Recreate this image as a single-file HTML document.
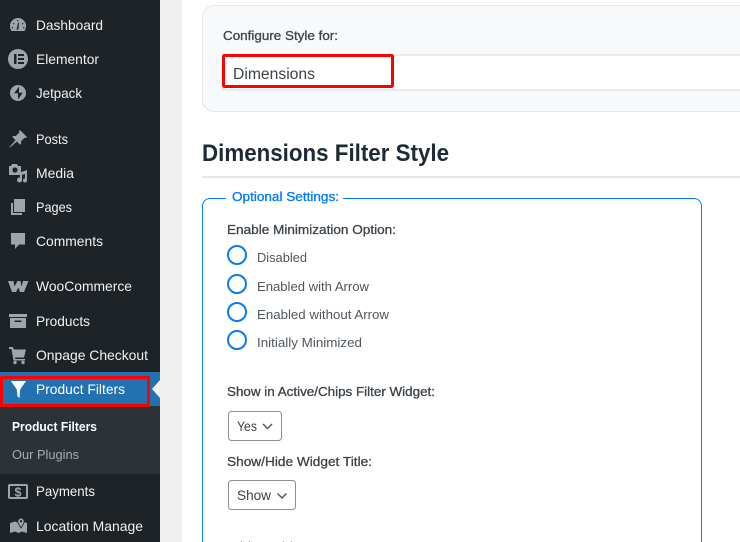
<!DOCTYPE html>
<html>
<head>
<meta charset="utf-8">
<title>Dimensions Filter Style</title>
<style>
html,body{margin:0;padding:0;width:740px;height:542px;overflow:hidden;background:#fff}
svg{display:block}
text{font-family:"Liberation Sans",sans-serif}
.m{font-size:14px;fill:#f0f0f1}
.l{font-size:13px;fill:#3c434a;stroke:#3c434a;stroke-width:.3}
.o{font-size:13px;fill:#50575e}
.i{fill:#a0a5aa}
</style>
</head>
<body>
<svg width="740" height="542" viewBox="0 0 740 542" xmlns="http://www.w3.org/2000/svg">
<rect width="740" height="542" fill="#fff"/>
<rect x="160" width="22" height="542" fill="#f0f0f1"/>
<rect width="160" height="542" fill="#1d2327"/>
<rect y="372" width="160" height="34" fill="#2271b1"/>
<rect y="406" width="160" height="68" fill="#2c3338"/>
<path d="M160 380 L152 389 L160 398Z" fill="#f0f0f1"/>
<rect x="1.5" y="377.5" width="147" height="28" fill="none" stroke="#f00" stroke-width="3"/>

<!-- sidebar text -->
<text class="m" x="36" y="30" textLength="67" lengthAdjust="spacingAndGlyphs">Dashboard</text>
<text class="m" x="36" y="64" textLength="63" lengthAdjust="spacingAndGlyphs">Elementor</text>
<text class="m" x="36" y="98" textLength="46" lengthAdjust="spacingAndGlyphs">Jetpack</text>
<text class="m" x="36" y="144" textLength="32" lengthAdjust="spacingAndGlyphs">Posts</text>
<text class="m" x="36" y="178" textLength="38" lengthAdjust="spacingAndGlyphs">Media</text>
<text class="m" x="36" y="212" textLength="36" lengthAdjust="spacingAndGlyphs">Pages</text>
<text class="m" x="36" y="246" textLength="67" lengthAdjust="spacingAndGlyphs">Comments</text>
<text class="m" x="36" y="291" textLength="96" lengthAdjust="spacingAndGlyphs">WooCommerce</text>
<text class="m" x="36" y="326" textLength="54" lengthAdjust="spacingAndGlyphs">Products</text>
<text class="m" x="36" y="360" textLength="112" lengthAdjust="spacingAndGlyphs">Onpage Checkout</text>
<text class="m" x="36" y="394" textLength="89" lengthAdjust="spacingAndGlyphs" style="fill:#fff">Product Filters</text>
<text x="12" y="431" font-size="13" font-weight="700" fill="#fff" textLength="85" lengthAdjust="spacingAndGlyphs">Product Filters</text>
<text x="12" y="459" font-size="13" fill="#a7aaad" textLength="67" lengthAdjust="spacingAndGlyphs">Our Plugins</text>
<text class="m" x="36" y="496" textLength="59" lengthAdjust="spacingAndGlyphs">Payments</text>
<text class="m" x="36" y="531" textLength="107" lengthAdjust="spacingAndGlyphs">Location Manage</text>

<!-- dashboard -->
<path class="i" d="M18 18a8 8 0 0 1 8 8c0 2-.6 3.700-1.600 5H11.600A8 8 0 0 1 10 26a8 8 0 0 1 8-8z"/>
<path d="M16.500 29.500l1.700-7 .8.2-.6 6.800zM13 23h1.200v1.200H13zM22 23h1.200v1.200H22zM11.800 27H13v1.200h-1.200zM23.200 27h1.200v1.200h-1.200zM17 20h1.200v1.200H17z" fill="#1d2327"/>
<!-- elementor -->
<circle class="i" cx="18" cy="59" r="10"/>
<path d="M14 54h2.500v10H14zM18 54h6v2h-6zM18 58h6v2h-6zM18 62h6v2h-6z" fill="#1d2327"/>
<!-- jetpack -->
<circle class="i" cx="18" cy="93" r="8"/>
<path d="M19 86.500v6.300h3.800l-4.800 6.700v-6.300h-3.800z" fill="#1d2327"/>
<!-- pin -->
<path class="i" d="M20 130l7 7-1.500 1-1-.3-3.500 3.500c.4 1.500 0 2.800-.8 3.600l-3.300-3.300-6.900 6-.5-.5 6-6.900-3.300-3.300c.8-.8 2.100-1.200 3.600-.8l3.500-3.500-.3-1z"/>
<!-- media -->
<path class="i" d="M12 164h5l1 2h3v9H9v-9h2z"/>
<circle cx="15" cy="170" r="2.600" fill="#1d2327"/>
<path class="i" d="M27 170v10.500a2 2 0 1 1-2-2v-4.500l-3 .8v5.200a2.500 2.500 0 1 1-2.500-2.500h.5v-5z"/>
<!-- pages -->
<path class="i" d="M14 199h11v13H14z"/>
<path class="i" d="M11 203h2v10h9v2H11z"/>
<!-- comments -->
<path class="i" d="M11 233h14v11.500h-6l-4 4.500v-4.500h-4z"/>
<!-- woo -->
<path class="i" d="M8 281h5.500l1 5.500 3-5.500h3l1 5.500 1.500-5.500h5.500l-4.500 11h-4l-1.500-4.500-2.500 4.500h-4z"/>
<!-- products -->
<path class="i" d="M9 314h18v3H9zM10 318h16v10H10z"/>
<path d="M14.500 320.500h7v1.500h-7z" fill="#1d2327"/>
<!-- cart -->
<path class="i" d="M9 347h4l.8 2.500H26l-2 8H15l.4 1.500H25v1.500H13.500L11.500 349H9z"/>
<circle class="i" cx="15" cy="362.500" r="1.700"/><circle class="i" cx="23" cy="362.500" r="1.700"/>
<!-- filter -->
<path d="M11 381h15l-5.800 8.500-.7 8.500-2-1.500-.7-7z" fill="#fff"/>
<!-- payments -->
<rect x="9" y="485" width="18" height="13" rx="1" fill="none" stroke="#a0a5aa" stroke-width="2"/>
<text x="18" y="496.500" font-size="12.500" font-weight="700" fill="#a0a5aa" text-anchor="middle">$</text>
<!-- location -->
<path class="i" d="M10 523l5-1.500 3.500 1.500 3.500-1.500 5 1.500v10l-5-1.500-3.500 1.500-3.500-1.500-5 1.500z"/>
<path d="M21 518a3.200 3.200 0 0 1 3.200 3.200c0 2-3.200 6.800-3.200 6.800s-3.200-4.800-3.200-6.800A3.200 3.200 0 0 1 21 518z" fill="#8fa3b5" stroke="#1d2327" stroke-width=".8"/>
<circle cx="21" cy="521.200" r="1.100" fill="#1d2327"/>

<!-- config card -->
<path d="M746 5.500H214a11.500 11.500 0 0 0-11.500 11.500v83a11.500 11.500 0 0 0 11.500 11.500h532z" fill="#f8f9fb" stroke="#e3e6ee" stroke-width="1"/>
<rect x="223" y="55" width="530" height="35" rx="4" fill="#fff" stroke="#e3e6ee" stroke-width="1.500"/>
<text class="l" x="223" y="40" textLength="115" lengthAdjust="spacingAndGlyphs">Configure Style for:</text>
<rect x="223.500" y="55.500" width="169" height="31" rx="1" fill="none" stroke="#f00" stroke-width="3"/>
<text x="233" y="79" font-size="15.500" fill="#3c434a" textLength="82" lengthAdjust="spacingAndGlyphs">Dimensions</text>

<!-- heading -->
<text x="202" y="161" font-size="24" font-weight="700" fill="#1f2937" textLength="247" lengthAdjust="spacingAndGlyphs">Dimensions Filter Style</text>
<rect x="202" y="176" width="538" height="2" fill="#e3e6ee"/>

<!-- fieldset -->
<path d="M226 198.500H210a7.500 7.500 0 0 0-7.500 7.500V542M343 198.500H694a7.500 7.500 0 0 1 7.500 7.500V542" fill="none" stroke="#007bff" stroke-width="1"/>
<text x="232" y="201" font-size="12.500" fill="#007bff" stroke="#007bff" stroke-width=".3" textLength="107" lengthAdjust="spacingAndGlyphs">Optional Settings:</text>

<text class="l" x="227" y="234" textLength="169" lengthAdjust="spacingAndGlyphs">Enable Minimization Option:</text>
<g fill="#fff" stroke="#0a7cf0" stroke-width="2">
<circle cx="237" cy="255" r="9"/>
<circle cx="237" cy="284" r="9"/>
<circle cx="237" cy="312" r="9"/>
<circle cx="237" cy="340" r="9"/>
</g>
<text class="o" x="257" y="262" textLength="50" lengthAdjust="spacingAndGlyphs">Disabled</text>
<text class="o" x="257" y="291" textLength="112" lengthAdjust="spacingAndGlyphs">Enabled with Arrow</text>
<text class="o" x="257" y="319" textLength="132" lengthAdjust="spacingAndGlyphs">Enabled without Arrow</text>
<text class="o" x="257" y="347" textLength="105" lengthAdjust="spacingAndGlyphs">Initially Minimized</text>

<text class="l" x="227" y="396" textLength="208" lengthAdjust="spacingAndGlyphs">Show in Active/Chips Filter Widget:</text>
<rect x="228.500" y="411.500" width="53" height="29" rx="3" fill="#fff" stroke="#8c8f94"/>
<text x="237" y="431" font-size="14" fill="#3c434a" textLength="20" lengthAdjust="spacingAndGlyphs">Yes</text>
<path d="M263 424l4.500 4.500 4.500-4.500" fill="none" stroke="#50575e" stroke-width="1.500"/>

<text class="l" x="227" y="466" textLength="145" lengthAdjust="spacingAndGlyphs">Show/Hide Widget Title:</text>
<rect x="228.500" y="480.500" width="67" height="29" rx="3" fill="#fff" stroke="#8c8f94"/>
<text x="237" y="500" font-size="14" fill="#3c434a" textLength="34" lengthAdjust="spacingAndGlyphs">Show</text>
<path d="M277.500 493.500l4.500 4.500 4.500-4.500" fill="none" stroke="#50575e" stroke-width="1.500"/>

<g fill="#8a8f96"><rect x="241" y="541" width="1" height="1"/><rect x="249" y="541" width="1" height="1"/><rect x="283" y="541" width="1" height="1"/><rect x="291" y="541" width="1" height="1"/></g>
</svg>
</body>
</html>
